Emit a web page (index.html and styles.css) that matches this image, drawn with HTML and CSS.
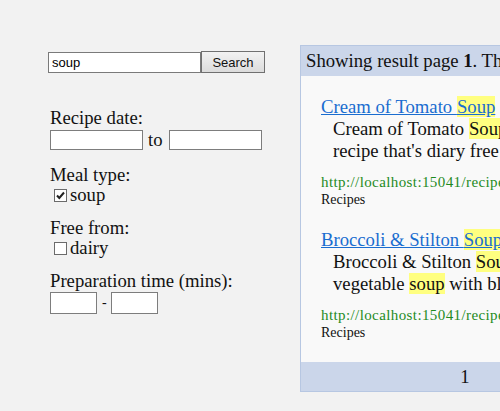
FILE: index.html
```html
<!DOCTYPE html>
<html lang="en">
<head>
  <meta charset="UTF-8" />
  <meta name="viewport" content="width=device-width, initial-scale=1.0" />
  <title>Recipe Search</title>
  <link rel="stylesheet" href="styles.css">
</head>
<body>
  <div class="page">
    <div class="sidebar">
      <form class="search-form">
        <input type="text" class="search-box" value="soup" />
        <button type="button" class="search-btn">Search</button>
      </form>

      <div class="filters">
        <div class="group">
          <div class="group-label">Recipe date:</div>
          <div class="range">
            <input type="text" class="date-input" />
            <span class="to">to</span>
            <input type="text" class="date-input" />
          </div>
        </div>

        <div class="group">
          <div class="group-label">Meal type:</div>
          <label class="check-row"><input type="checkbox" checked />soup</label>
        </div>

        <div class="group">
          <div class="group-label">Free from:</div>
          <label class="check-row"><input type="checkbox" />dairy</label>
        </div>

        <div class="group">
          <div class="group-label">Preparation time (mins):</div>
          <div class="range">
            <input type="text" class="mins-input" />
            <span class="dash">-</span>
            <input type="text" class="mins-input" />
          </div>
        </div>
      </div>
    </div>

    <div class="results">
      <div class="results-head">Showing result page <b>1</b>. There are 2 results for your search.</div>

      <div class="results-body">
        <div class="result">
          <a href="#" class="result-title">Cream of Tomato <span class="hl">Soup</span></a>
          <div class="result-desc">Cream of Tomato <span class="hl">Soup</span>, a smooth and simple<br>recipe that's diary free and ready in 30 minutes.</div>
          <div class="result-url">http://localhost:15041/recipeview/cream-of-tomato-soup</div>
          <div class="result-cat">Recipes</div>
        </div>

        <div class="result">
          <a href="#" class="result-title">Broccoli &amp; Stilton <span class="hl">Soup</span></a>
          <div class="result-desc">Broccoli &amp; Stilton <span class="hl">Soup</span>, a rich and hearty<br>vegetable <span class="hl">soup</span> with blue cheese crumbled on top.</div>
          <div class="result-url">http://localhost:15041/recipeview/broccoli-stilton-soup</div>
          <div class="result-cat">Recipes</div>
        </div>
      </div>

      <div class="results-foot">1</div>
    </div>
  </div>
</body>
</html>
```

FILE: styles.css
```css
html,
body {
  overflow: hidden;
}

body {
  margin: 0;
  padding: 0;
  background-color: #f2f2f2;
  font-family: "Liberation Serif", serif;
  font-size: 18.7px;
  line-height: 20px;
  color: #111;
}

.page {
  display: flex;
  padding-top: 45px;
}

.sidebar {
  width: 300px;
  flex-shrink: 0;
  padding: 6px 0 0 48px;
  box-sizing: border-box;
}

.search-form {
  display: flex;
  align-items: center;
  margin: 0;
}

.search-box {
  width: 153px;
  height: 21px;
  margin: 0;
  padding: 0 3px;
  border: 1px solid #7a7a7a;
  box-sizing: border-box;
  font-family: "Liberation Sans", Arial, sans-serif;
  font-size: 13px;
  color: #000;
  background: #fff;
}

.search-btn {
  width: 64px;
  height: 22px;
  margin: 0;
  padding: 0;
  border: 1px solid #707070;
  background: linear-gradient(#f2f2f2, #dcdcdc);
  font-family: "Liberation Sans", Arial, sans-serif;
  font-size: 13px;
  color: #111;
}

.filters {
  margin-top: 35px;
  padding-left: 2px;
}

.group {
  margin-bottom: 13px;
}

.group-label {
  height: 20px;
}

.range {
  display: flex;
  align-items: center;
  height: 24px;
}

.date-input,
.mins-input {
  margin: 0;
  padding: 0 2px;
  border: 1px solid #7d7d7d;
  background: #fff;
  box-sizing: border-box;
  font-size: 14px;
}

.date-input {
  width: 93px;
  height: 20px;
}

.mins-input {
  width: 47px;
  height: 22px;
}

.to {
  margin: 0 6px 0 5px;
}

.dash {
  margin: 0 4px 0 5px;
  font-size: 14px;
}

.check-row {
  display: flex;
  align-items: center;
  height: 20px;
}

.check-row input {
  appearance: none;
  width: 13px;
  height: 13px;
  margin: 1px 3px 0 4px;
  border: 1px solid #6b6b6b;
  background: #fff;
  box-sizing: border-box;
}

.check-row input:checked {
  background: #fff url("data:image/svg+xml,%3Csvg xmlns='http://www.w3.org/2000/svg' viewBox='0 0 11 11'%3E%3Cpath d='M2 5.5 L4.3 8 L9 2.5' fill='none' stroke='%23222' stroke-width='2'/%3E%3C/svg%3E") no-repeat center/11px 11px;
}

.results {
  width: 328px;
  flex-shrink: 0;
  border: 1px solid #b7c7e2;
  background-color: #f9f9f9;
}

.results-head {
  height: 30px;
  line-height: 30px;
  padding-left: 5px;
  white-space: nowrap;
  background-color: #cbd6ea;
}

.results-body {
  padding: 20px 0 21px 20px;
}

.result {
  margin-bottom: 21px;
}

.result:last-child {
  margin-bottom: 0;
}

.result-title {
  display: inline-block;
  line-height: 22px;
  color: #1a6dd0;
  text-decoration: underline;
  white-space: nowrap;
}

.result-desc {
  padding-left: 12px;
  line-height: 22px;
  white-space: nowrap;
}

.result-url {
  margin-top: 12px;
  font-size: 15px;
  letter-spacing: 0.4px;
  line-height: 17px;
  color: #1e8b1e;
  white-space: nowrap;
}

.result-cat {
  font-size: 14px;
  line-height: 17px;
}

.hl {
  background-color: #ffff80;
}

.results-foot {
  height: 29px;
  line-height: 29px;
  text-align: center;
  background-color: #cbd6ea;
}
```
